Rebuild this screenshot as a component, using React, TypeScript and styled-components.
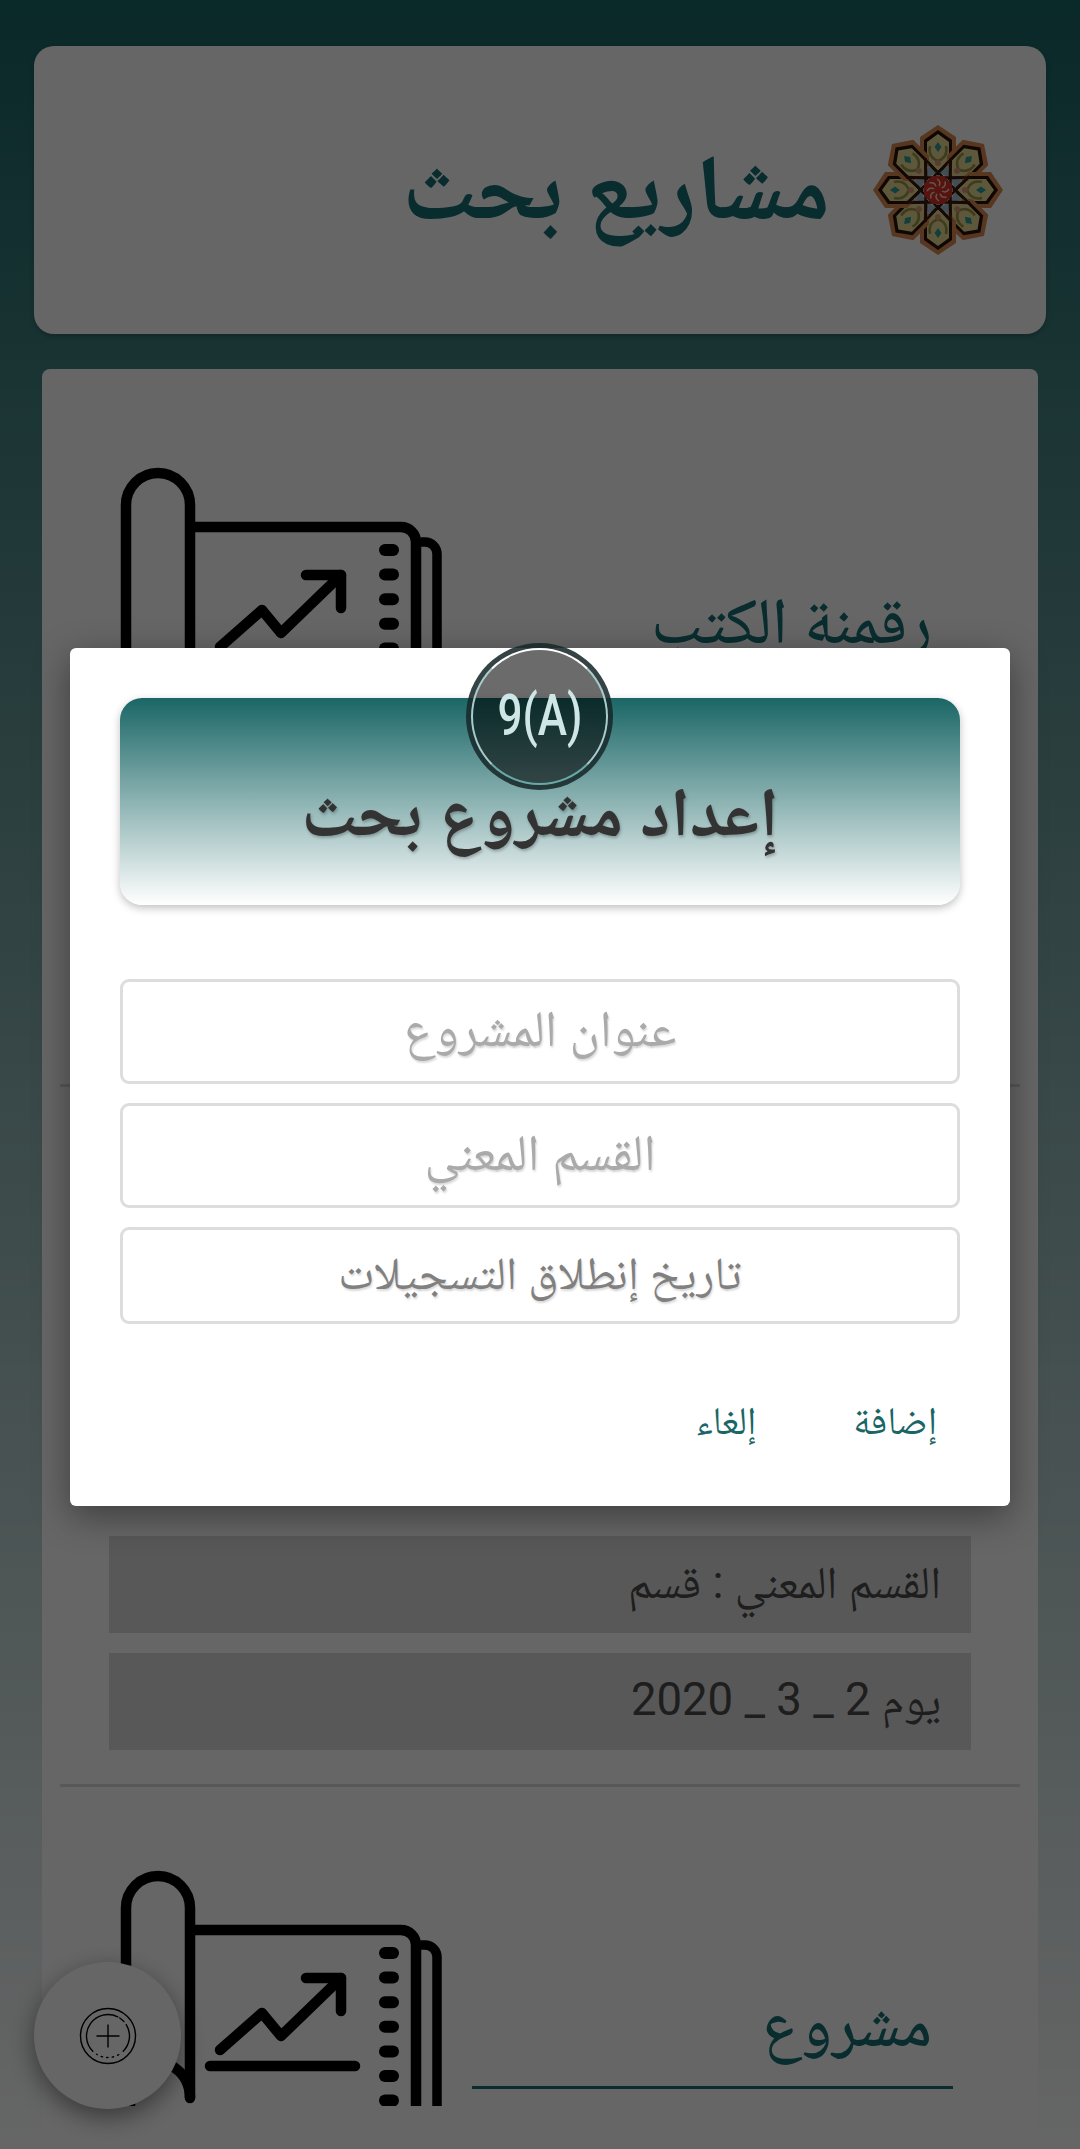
import React from 'react';
import styled, { createGlobalStyle } from 'styled-components';

const GlobalStyle = createGlobalStyle`
  html, body {
    margin: 0;
    padding: 0;
  }
  body {
    font-family: Roboto, "Noto Naskh Arabic", "Droid Arabic Naskh", "Noto Sans Arabic", "Droid Sans Arabic", "DejaVu Sans", sans-serif;
  }
`;

function polar(r: number, deg: number) {
  const a = (deg * Math.PI) / 180;
  return `${(30 + r * Math.cos(a)).toFixed(2)} ${(30 + r * Math.sin(a)).toFixed(2)}`;
}

function arc(r: number, from: number, to: number) {
  const large = to - from > 180 ? 1 : 0;
  return `M${polar(r, from)} A${r} ${r} 0 ${large} 1 ${polar(r, to)}`;
}

function ChartScroll() {
  const dots = [88, 112.6, 137.2, 161.8, 186.4, 211, 235.6];
  return (
    <svg width="335" height="241" viewBox="0 0 335 241" fill="none" stroke="#000" strokeWidth="10.5" strokeLinecap="round" strokeLinejoin="round">
      <path d="M11 241 V43 A32 32 0 0 1 75 43 V233" strokeLinecap="butt" />
      <path d="M15 241 C15 215 45 190 60 203 C70 210 75 220 75 233" />
      <path d="M75 65 H286 A15 15 0 0 1 301 80 V241" strokeLinecap="butt" />
      <path d="M306 80 H310 A12 12 0 0 1 322 92 V241" strokeWidth="9.5" strokeLinecap="butt" />
      {dots.map((y) => (
        <line key={y} x1="270" x2="278" y1={y} y2={y} strokeWidth="12" />
      ))}
      <path d="M105 185 L147 148 L166 171 L226 113" />
      <path d="M191 113 H226 V146" />
      <path d="M95 201 H240" />
    </svg>
  );
}

function Ornament() {
  const angles = [0, 45, 90, 135, 180, 225, 270, 315];
  const petal = (
    <>
      <path d="M0 -65 L18 -53 V-31 L12 -24 H-12 L-18 -31 V-53 Z" fill="#d98a52" />
      <path d="M0 -60 L14 -50 V-30 L0 -14 L-14 -30 V-50 Z" fill="#2a1208" />
      <path d="M0 -56 L11 -48 V-31 L0 -19 L-11 -31 V-48 Z" fill="#e8dc96" />
      <path d="M0 -48 L3.5 -43 L0 -38 L-3.5 -43 Z" fill="#2f9c94" />
      <path d="M-8 -44 C-10 -35 -5 -31 0 -29 C5 -31 10 -35 8 -44" fill="none" stroke="#9c9648" strokeWidth="2.6" />
      <circle cx="0" cy="-27" r="3" fill="#d89a78" />
    </>
  );
  return (
    <svg width="130" height="130" viewBox="-65 -65 130 130">
      {angles.map((a) => (
        <g key={a} transform={`rotate(${a})`}>
          {petal}
        </g>
      ))}
      {angles.map((a) => (
        <path key={a} transform={`rotate(${a + 22.5})`} d="M0 -26 L5 -16 L-5 -16 Z" fill="#a6c4d0" />
      ))}
      {angles.map((a) => (
        <path key={a} transform={`rotate(${a})`} d="M-12.5 -32 V32 M12.5 -32 V32" stroke="#3a1a0c" strokeWidth="2" />
      ))}
      <polygon points="-6,-14 6,-14 14,-6 14,6 6,14 -6,14 -14,6 -14,-6" fill="#d8332a" />
      {angles.map((a) => (
        <path key={a} transform={`rotate(${a})`} d="M1 -4 C3 -7 2 -9 -1 -11" fill="none" stroke="#f0d4bc" strokeWidth="1.5" />
      ))}
    </svg>
  );
}

function AddCircle() {
  return (
    <svg width="60" height="60" viewBox="0 0 60 60" fill="none" stroke="#000" strokeWidth="1.4" strokeLinecap="round">
      <circle cx="30" cy="30" r="27.5" />
      <path d={arc(21.5, 135, 297)} />
      <path d={arc(21.5, 303, 318)} />
      <path d={arc(21.5, 328, 405)} />
      <path d={arc(21.5, 60, 122)} strokeDasharray="1.4 4.2" />
      <path d="M19 30 H41 M30 19 V41" />
    </svg>
  );
}

const items = [
  { title: 'رقمنة الكتب', first: true, rows: [] as string[] },
  { title: 'مشروع', first: false, rows: ['القسم المعني : قسم', 'يوم 2 _ 3 _ 2020'] },
  { title: 'مشروع', first: false, rows: [] as string[] },
];

export default function App() {
  return (
    <>
      <GlobalStyle />
      <Page>
        <Header>
          <HeaderTitle dir="rtl">مشاريع بحث</HeaderTitle>
          <Ornament />
        </Header>
        <ListCard>
          {items.map((item, idx) => (
            <Item key={idx} $first={item.first}>
              <ItemTop>
                <ChartScroll />
                <TitleBlock dir="rtl">{item.title}</TitleBlock>
              </ItemTop>
              <Rows>
                {item.rows.map((row) => (
                  <InfoRow key={row} dir="rtl">
                    {row}
                  </InfoRow>
                ))}
              </Rows>
            </Item>
          ))}
        </ListCard>
        <Fab>
          <AddCircle />
        </Fab>
        <Scrim>
          <Dialog>
            <Badge>
              <BadgeText>9(A)</BadgeText>
            </Badge>
            <DialogHead dir="rtl">إعداد مشروع بحث</DialogHead>
            <Fields>
              <Field dir="rtl" $height={105}>عنوان المشروع</Field>
              <Field dir="rtl" $height={105}>القسم المعني</Field>
              <Field dir="rtl" $height={97} $filled>تاريخ إنطلاق التسجيلات</Field>
            </Fields>
            <Actions dir="rtl">
              <ActionButton>إضافة</ActionButton>
              <ActionButton>إلغاء</ActionButton>
            </Actions>
          </Dialog>
        </Scrim>
      </Page>
    </>
  );
}

const Page = styled.div`
  position: relative;
  width: 1080px;
  height: 2149px;
  overflow: hidden;
  padding-top: 46px;
  box-sizing: border-box;
  background: linear-gradient(180deg, #1a6666 0%, #ffffff 100%);
`;

const Header = styled.div`
  display: flex;
  align-items: center;
  justify-content: flex-end;
  gap: 43px;
  height: 288px;
  margin: 0 34px;
  padding-right: 43px;
  border-radius: 20px;
  background: #fff;
  box-shadow: 0 3px 6px rgba(0, 0, 0, 0.2);
`;

const HeaderTitle = styled.h1`
  margin: 0 0 4px;
  font-size: 92px;
  line-height: 1;
  font-weight: 700;
  color: #187076;
`;

const ListCard = styled.div`
  margin: 35px 42px 0;
  padding: 15px 18px 0;
  border-radius: 8px;
  background: #fff;
`;

const Item = styled.div<{ $first: boolean }>`
  display: flex;
  flex-direction: column;
  justify-content: space-between;
  box-sizing: border-box;
  height: ${(p) => (p.$first ? 703 : 700)}px;
  padding: 78px 49px 34px;
  border-bottom: 3px solid #ddd;
`;

const ItemTop = styled.div`
  display: flex;
  align-items: flex-end;
  justify-content: space-between;
  padding-left: 6px;
`;

const TitleBlock = styled.div`
  width: 481px;
  box-sizing: border-box;
  margin: 0 18px 17px 0;
  padding: 0 21px 20px 0;
  border-bottom: 3px solid #187076;
  font-size: 65px;
  line-height: 1.3;
  font-weight: 500;
  color: #187076;
`;

const Rows = styled.div`
  display: flex;
  flex-direction: column;
  gap: 20px;
`;

const InfoRow = styled.div`
  display: flex;
  align-items: center;
  box-sizing: border-box;
  height: 97px;
  padding: 7px 30px 0;
  background: #dcdcdc;
  font-size: 45.5px;
  color: #4c4c4c;
`;

const Fab = styled.button`
  position: absolute;
  left: 34px;
  top: 1962px;
  display: flex;
  align-items: center;
  justify-content: center;
  width: 147px;
  height: 147px;
  padding: 0;
  border: 0;
  border-radius: 50%;
  background: #fff;
  box-shadow: 0 8px 24px rgba(0, 0, 0, 0.45);
`;

const Scrim = styled.div`
  position: absolute;
  inset: 0;
  display: flex;
  align-items: flex-start;
  justify-content: center;
  padding-top: 648px;
  background: rgba(0, 0, 0, 0.6);
`;

const Dialog = styled.div`
  position: relative;
  box-sizing: border-box;
  width: 940px;
  height: 858px;
  padding: 50px 50px 0;
  border-radius: 6px;
  background: #fff;
  box-shadow: 0 10px 36px rgba(0, 0, 0, 0.4);
`;

const Badge = styled.div`
  position: absolute;
  left: 396px;
  top: -5px;
  display: flex;
  justify-content: center;
  box-sizing: border-box;
  width: 147px;
  height: 147px;
  padding-top: 38px;
  border: 5px solid rgba(30, 50, 52, 0.7);
  border-radius: 50%;
  background: rgba(0, 0, 0, 0.58);

  &::before {
    content: '';
    position: absolute;
    inset: 0;
    border: 2px solid;
    border-color: #fff #a8cccc #6aa8a8;
    border-radius: 50%;
  }
`;

const BadgeText = styled.span`
  display: inline-block;
  font-family: Roboto, sans-serif;
  font-size: 58px;
  font-weight: 500;
  line-height: 58px;
  color: #cfe6e6;
  transform: scaleX(0.76);
`;

const DialogHead = styled.div`
  display: flex;
  align-items: center;
  justify-content: center;
  box-sizing: border-box;
  height: 207px;
  padding-top: 22px;
  border-radius: 22px;
  background: linear-gradient(180deg, #1a6666 0%, #ffffff 100%);
  box-shadow: 0 3px 8px rgba(0, 0, 0, 0.25);
  font-size: 69px;
  line-height: 1;
  font-weight: 700;
  color: #333;
  text-shadow: 1px 2px 3px rgba(0, 0, 0, 0.25);
`;

const Fields = styled.div`
  display: flex;
  flex-direction: column;
  gap: 19px;
  margin-top: 74px;
`;

const Field = styled.div<{ $height: number; $filled?: boolean }>`
  display: flex;
  align-items: center;
  justify-content: center;
  box-sizing: border-box;
  height: ${(p) => p.$height}px;
  padding-bottom: 6px;
  border: 3px solid #ddd;
  border-radius: 9px;
  font-size: ${(p) => (p.$filled ? 46 : 51)}px;
  line-height: 1;
  color: ${(p) => (p.$filled ? '#808080' : '#aaa')};
  text-shadow: 1px 2px 2px rgba(0, 0, 0, 0.15);
`;

const Actions = styled.div`
  display: flex;
  gap: 97px;
  margin-top: 78px;
  padding-right: 23px;
`;

const ActionButton = styled.button`
  padding: 0;
  border: 0;
  background: none;
  font-family: inherit;
  font-size: 39px;
  line-height: 1;
  color: #1a6666;
`;
